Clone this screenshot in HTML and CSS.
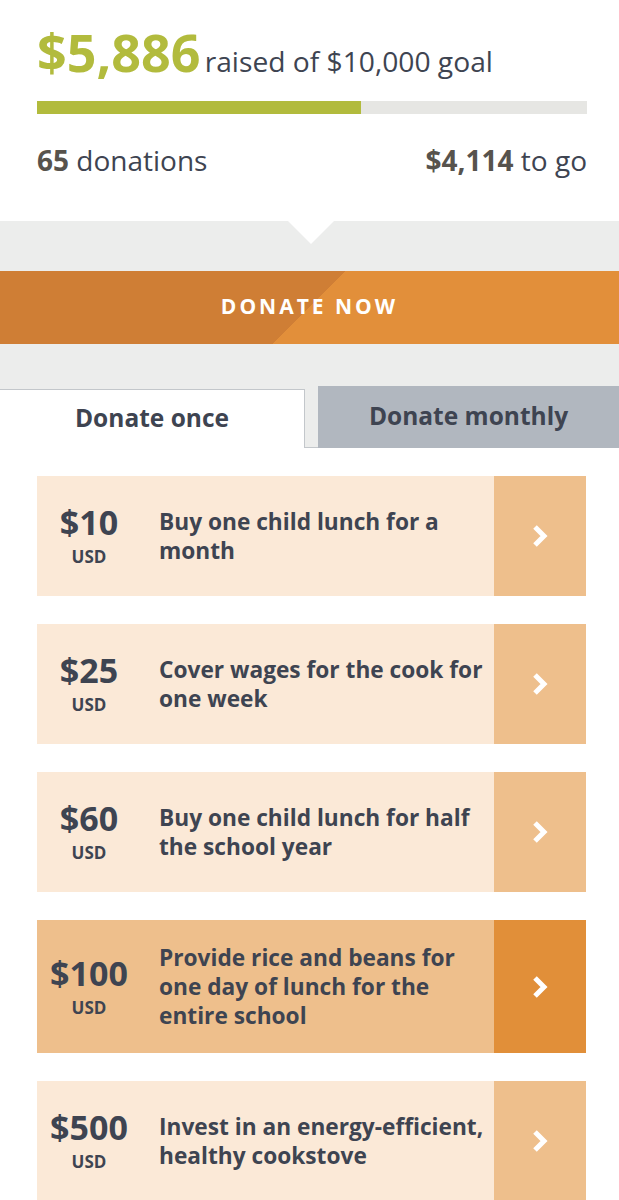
FILE: index.html
```html
<!DOCTYPE html>
<html lang="en">
<head>
<meta charset="utf-8">
<title>Donate</title>
<link rel="stylesheet" href="styles.css">
</head>
<body>
<section class="summary">
  <div class="headline"><span class="raised">$5,886</span> <span class="goal">raised of $10,000 goal</span></div>
  <div class="bar"><div class="fill" style="width: 58.86%"></div></div>
  <div class="stats">
    <div><b>65</b> donations</div>
    <div><b>$4,114</b> to go</div>
  </div>
</section>
<section class="panel">
  <a class="donate-btn" href="#">DONATE NOW</a>
  <div class="tabs">
    <div class="tab active">Donate once</div>
    <div class="tab-gap"></div>
    <div class="tab">Donate monthly</div>
  </div>
</section>
<section class="options">
  <div class="card">
    <div class="amount"><div class="price">$10</div><div class="cur">USD</div></div>
    <div class="desc">Buy one child lunch for a month</div>
    <div class="go"><svg width="18" height="24" viewBox="0 0 18 24"><polyline points="4,3 13,12 4,21"/></svg></div>
  </div>
  <div class="card">
    <div class="amount"><div class="price">$25</div><div class="cur">USD</div></div>
    <div class="desc">Cover wages for the cook for one week</div>
    <div class="go"><svg width="18" height="24" viewBox="0 0 18 24"><polyline points="4,3 13,12 4,21"/></svg></div>
  </div>
  <div class="card">
    <div class="amount"><div class="price">$60</div><div class="cur">USD</div></div>
    <div class="desc">Buy one child lunch for half the school year</div>
    <div class="go"><svg width="18" height="24" viewBox="0 0 18 24"><polyline points="4,3 13,12 4,21"/></svg></div>
  </div>
  <div class="card selected">
    <div class="amount"><div class="price">$100</div><div class="cur">USD</div></div>
    <div class="desc">Provide rice and beans for one day of lunch for the entire school</div>
    <div class="go"><svg width="18" height="24" viewBox="0 0 18 24"><polyline points="4,3 13,12 4,21"/></svg></div>
  </div>
  <div class="card">
    <div class="amount"><div class="price">$500</div><div class="cur">USD</div></div>
    <div class="desc">Invest in an energy-efficient, healthy cookstove</div>
    <div class="go"><svg width="18" height="24" viewBox="0 0 18 24"><polyline points="4,3 13,12 4,21"/></svg></div>
  </div>
</section>
</body>
</html>
```
FILE: styles.css
```css
* { box-sizing: border-box; }
body {
  margin: 0;
  font-family: "Open Sans", "Liberation Sans", sans-serif;
  color: #3e4451;
  background: #fff;
}
.summary {
  padding: 22px 32px 42px 37px;
}
.headline {
  line-height: 60px;
  white-space: nowrap;
}
.raised {
  font-size: 52px;
  font-weight: 700;
  color: #b2bb3d;
}
.goal {
  font-size: 28.2px;
  color: #3e4451;
}
.bar {
  margin-top: 5px;
  height: 13px;
  background: #e6e6e3;
}
.fill {
  height: 100%;
  background: #b2bb3d;
}
.stats {
  margin-top: 27px;
  display: flex;
  justify-content: space-between;
  font-size: 28px;
  line-height: 38px;
}
.stats b {
  color: #57534d;
  font-weight: 700;
}
.panel {
  position: relative;
  background: #ecedec;
  padding-top: 50px;
}
.panel::before {
  content: "";
  position: absolute;
  top: 0;
  left: 50%;
  margin-left: -22px;
  border-left: 23px solid transparent;
  border-right: 23px solid transparent;
  border-top: 23px solid #fff;
}
.donate-btn {
  display: flex;
  align-items: center;
  justify-content: center;
  height: 73px;
  padding-bottom: 3px;
  background: linear-gradient(315deg, #e28f3a 50%, #cf7e35 50%);
  color: #fff;
  text-decoration: none;
  font-size: 21px;
  font-weight: 700;
  letter-spacing: 3px;
}
.tabs {
  margin-top: 42px;
  display: flex;
  align-items: flex-end;
}
.tab {
  flex: 1;
  height: 62px;
  display: flex;
  align-items: center;
  justify-content: center;
  padding-bottom: 3px;
  background: #b1b7bf;
  font-size: 24.5px;
  font-weight: 700;
  color: #3e4451;
}
.tab.active {
  flex: 0 0 305px;
  height: 59px;
  background: #fff;
  border-top: 1px solid #c3c7cb;
  border-right: 1px solid #c3c7cb;
}
.tab-gap {
  flex: 0 0 13px;
  height: 1px;
  background: #c3c7cb;
}
.options {
  padding: 28px 33px 0 37px;
  display: flex;
  flex-direction: column;
  gap: 28px;
}
.card {
  display: flex;
  min-height: 120px;
  background: #fbe9d7;
}
.card.selected {
  background: #eebf8c;
}
.amount {
  flex: 0 0 104px;
  display: flex;
  flex-direction: column;
  align-items: center;
  justify-content: center;
  font-weight: 700;
  color: #3e4451;
}
.price {
  font-size: 34px;
  line-height: 46px;
}
.cur {
  font-size: 17px;
  line-height: 24px;
  font-weight: 700;
  margin-bottom: 4px;
}
.desc {
  flex: 1;
  display: flex;
  align-items: center;
  padding: 23px 2px 23px 18px;
  font-size: 22.7px;
  line-height: 29px;
  font-weight: 700;
}
.go {
  flex: 0 0 92px;
  display: flex;
  align-items: center;
  justify-content: center;
  background: #eebf8c;
}
.card.selected .go {
  background: #e18f39;
}
.go svg polyline {
  fill: none;
  stroke: #fff;
  stroke-width: 5;
  stroke-linecap: butt;
  stroke-linejoin: miter;
}
```
